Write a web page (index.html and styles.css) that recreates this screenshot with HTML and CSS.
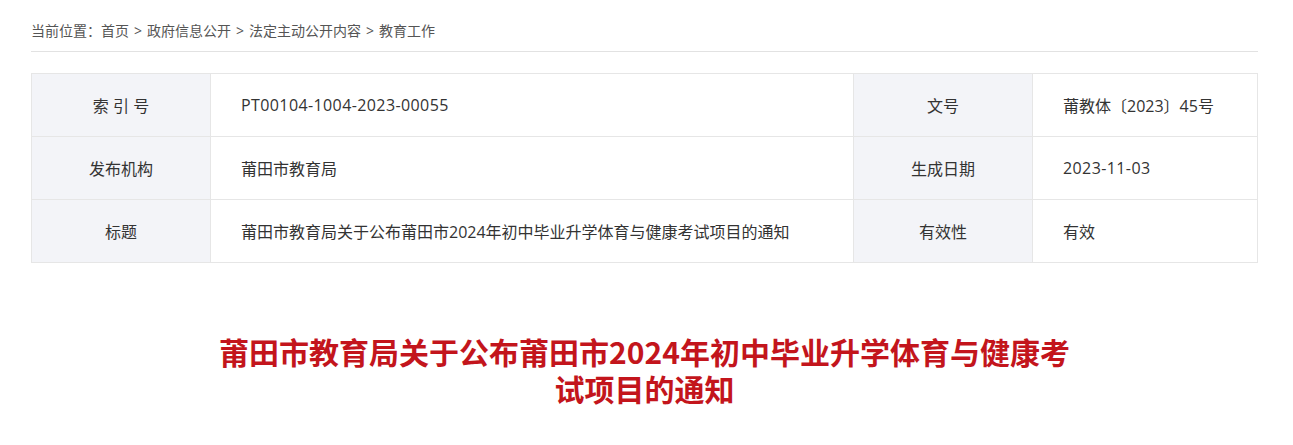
FILE: index.html
```html
<!DOCTYPE html>
<html lang="zh-CN">

<head>
    <meta charset="UTF-8">
    <meta name="viewport" content="width=device-width, initial-scale=1.0">
    <title>莆田市教育局关于公布莆田市2024年初中毕业升学体育与健康考试项目的通知</title>
    <link rel="stylesheet" href="styles.css">
</head>

<body>
    <div class="container">
        <div class="crumb">
            当前位置：<a href="#">首页</a><span class="sep">&gt;</span><a href="#">政府信息公开</a><span class="sep">&gt;</span><a href="#">法定主动公开内容</a><span class="sep">&gt;</span><a href="#">教育工作</a>
        </div>

        <table class="info">
            <tr>
                <th>索 引 号</th>
                <td class="code">PT00104-1004-2023-00055</td>
                <th>文号</th>
                <td class="narrow">莆教体〔2023〕45号</td>
            </tr>
            <tr>
                <th>发布机构</th>
                <td>莆田市教育局</td>
                <th>生成日期</th>
                <td class="narrow code">2023-11-03</td>
            </tr>
            <tr>
                <th>标题</th>
                <td>莆田市教育局关于公布莆田市2024年初中毕业升学体育与健康考试项目的通知</td>
                <th>有效性</th>
                <td class="narrow">有效</td>
            </tr>
        </table>

        <h1 class="title">莆田市教育局关于公布莆田市2024年初中毕业升学体育与健康考试项目的通知</h1>
    </div>
</body>
</html>
```

FILE: styles.css
```css
body {
    margin: 0;
    padding: 0;
    background: #fff;
    font-family: "Open Sans", "Noto Sans CJK SC", sans-serif;
    color: #333;
}

.container {
    width: 1227px;
    margin-left: 31px;
}

.crumb {
    height: 51px;
    line-height: 62px;
    font-size: 14px;
    color: #555;
    border-bottom: 1px solid #e2e2e2;
}

.crumb a {
    color: #555;
    text-decoration: none;
}

.crumb .sep {
    margin: 0 5px;
}

.info {
    width: 100%;
    margin-top: 21px;
    border-collapse: collapse;
    font-size: 16px;
    table-layout: fixed;
}

.info th,
.info td {
    height: 62px;
    border: 1px solid #e6e6e6;
    color: #333;
    padding: 0;
}

.info th {
    width: 178px;
    background: #f3f4f8;
    font-weight: normal;
    text-align: center;
}

.info td {
    padding-left: 30px;
    text-align: left;
}

.info td.code {
    letter-spacing: 0.4px;
}

.info td.narrow {
    width: 194px;
}

.title {
    width: 866px;
    margin: 70px auto 0;
    text-align: center;
    font-family: "Noto Sans CJK SC", sans-serif;
    font-size: 30px;
    line-height: 37px;
    font-weight: bold;
    color: #c3151c;
}
```
